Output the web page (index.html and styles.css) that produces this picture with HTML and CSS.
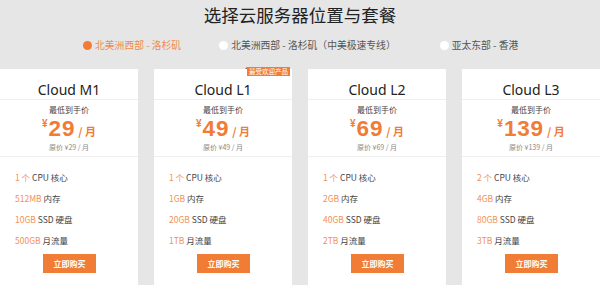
FILE: index.html
```html
<!DOCTYPE html>
<html lang="zh-CN">
<head>
<meta charset="utf-8">
<link rel="stylesheet" href="styles.css">
</head>
<body>
<div class="page">
  <h1 class="title">选择云服务器位置与套餐</h1>
  <div class="regions">
    <div class="region active"><span class="dot"></span>北美洲西部 - 洛杉矶</div>
    <div class="region"><span class="dot"></span>北美洲西部 - 洛杉矶（中美极速专线）</div>
    <div class="region"><span class="dot"></span>亚太东部 - 香港</div>
  </div>
  <div class="plans">
    <div class="card">
      <div class="name">Cloud M1</div>
      <div class="price-box">
        <div class="label">最低到手价</div>
        <div class="price"><span class="yen">¥</span><span class="amount">29</span><span class="unit">/ 月</span></div>
        <div class="orig">原价 ¥29 / 月</div>
      </div>
      <ul class="specs">
        <li><em>1 个</em> CPU 核心</li>
        <li><em>512MB</em> 内存</li>
        <li><em>10GB</em> SSD 硬盘</li>
        <li><em>500GB</em> 月流量</li>
      </ul>
      <span class="btn">立即购买</span>
    </div>
    <div class="card">
      <span class="badge">最受欢迎产品</span>
      <div class="name">Cloud L1</div>
      <div class="price-box">
        <div class="label">最低到手价</div>
        <div class="price"><span class="yen">¥</span><span class="amount">49</span><span class="unit">/ 月</span></div>
        <div class="orig">原价 ¥49 / 月</div>
      </div>
      <ul class="specs">
        <li><em>1 个</em> CPU 核心</li>
        <li><em>1GB</em> 内存</li>
        <li><em>20GB</em> SSD 硬盘</li>
        <li><em>1TB</em> 月流量</li>
      </ul>
      <span class="btn">立即购买</span>
    </div>
    <div class="card">
      <div class="name">Cloud L2</div>
      <div class="price-box">
        <div class="label">最低到手价</div>
        <div class="price"><span class="yen">¥</span><span class="amount">69</span><span class="unit">/ 月</span></div>
        <div class="orig">原价 ¥69 / 月</div>
      </div>
      <ul class="specs">
        <li><em>1 个</em> CPU 核心</li>
        <li><em>2GB</em> 内存</li>
        <li><em>40GB</em> SSD 硬盘</li>
        <li><em>2TB</em> 月流量</li>
      </ul>
      <span class="btn">立即购买</span>
    </div>
    <div class="card">
      <div class="name">Cloud L3</div>
      <div class="price-box">
        <div class="label">最低到手价</div>
        <div class="price"><span class="yen">¥</span><span class="amount">139</span><span class="unit">/ 月</span></div>
        <div class="orig">原价 ¥139 / 月</div>
      </div>
      <ul class="specs">
        <li><em>2 个</em> CPU 核心</li>
        <li><em>4GB</em> 内存</li>
        <li><em>80GB</em> SSD 硬盘</li>
        <li><em>3TB</em> 月流量</li>
      </ul>
      <span class="btn">立即购买</span>
    </div>
  </div>
</div>
</body>
</html>
```
FILE: styles.css
```css
html, body {
  margin: 0;
  padding: 0;
  background: #e6e6e6;
  overflow: hidden;
}
body {
  font-family: "Noto Sans", "Noto Sans CJK SC", sans-serif;
  color: #333;
}
.page {
  width: 600px;
}
.title {
  margin: 0;
  height: 30px;
  line-height: 30px;
  text-align: center;
  font-size: 17.5px;
  font-weight: normal;
  color: #222;
  font-family: "Noto Sans CJK SC", sans-serif;
}
.regions {
  display: flex;
  align-items: center;
  margin-top: 5px;
  height: 20px;
  padding-left: 83px;
  font-size: 9.8px;
  color: #555;
  font-family: "Noto Sans CJK SC", sans-serif;
}
.region {
  display: flex;
  align-items: center;
  white-space: nowrap;
  margin-right: 38px;
}
.region:nth-child(2) {
  margin-right: 44px;
}
.region.active {
  color: #f08a4b;
}
.dot {
  width: 9px;
  height: 9px;
  border-radius: 50%;
  background: #fff;
  margin-right: 3px;
}
.region.active .dot {
  background: #f07c35;
}
.plans {
  display: grid;
  grid-template-columns: repeat(4, 138px);
  gap: 16px;
  margin-top: 14px;
}
.card {
  position: relative;
  background: #fff;
  height: 230px;
}
.badge {
  position: absolute;
  top: -2px;
  right: 2px;
  background: #f07c35;
  color: #fff;
  font-size: 6.5px;
  line-height: 9px;
  padding: 0 2px;
  font-family: "Noto Sans CJK SC", sans-serif;
}
.badge::before {
  content: "";
  position: absolute;
  left: -2px;
  top: 0;
  border-bottom: 2px solid #b85a20;
  border-left: 2px solid transparent;
}
.name {
  height: 31px;
  box-sizing: border-box;
  padding-top: 12px;
  text-align: center;
  font-size: 14px;
  line-height: 18px;
  color: #222;
  border-bottom: 1px solid #eeeeee;
}
.price-box {
  height: 57px;
  box-sizing: border-box;
  padding-top: 4px;
  text-align: center;
  border-bottom: 1px solid #eeeeee;
  font-family: "Noto Sans CJK SC", sans-serif;
}
.label {
  font-size: 8px;
  line-height: 12px;
  color: #444;
}
.price {
  display: flex;
  justify-content: center;
  align-items: baseline;
  color: #f07c35;
  font-weight: bold;
  height: 26px;
  line-height: 26px;
  font-family: "Liberation Sans", "Noto Sans CJK SC", sans-serif;
}
.yen {
  font-size: 10px;
  align-self: flex-start;
  line-height: 16px;
  margin-right: 1px;
}
.amount {
  font-size: 22.5px;
  letter-spacing: 0.8px;
}
.unit {
  font-size: 11px;
  margin-left: 3px;
  font-family: "Noto Sans CJK SC", sans-serif;
}
.orig {
  font-size: 7px;
  line-height: 10px;
  color: #888;
}
.specs {
  list-style: none;
  margin: 0;
  padding: 10px 0 0 15px;
  font-size: 8.5px;
  color: #444;
  font-family: "Noto Sans CJK SC", sans-serif;
}
.specs li {
  height: 21px;
  line-height: 21px;
}
.specs em {
  font-style: normal;
  color: #f39157;
}
.btn {
  display: block;
  margin: 3px 0 0 43px;
  width: 53px;
  height: 19px;
  line-height: 19px;
  text-align: center;
  background: #f07c35;
  color: #fff;
  font-size: 8px;
  font-weight: bold;
  font-family: "Noto Sans CJK SC", sans-serif;
}
```
